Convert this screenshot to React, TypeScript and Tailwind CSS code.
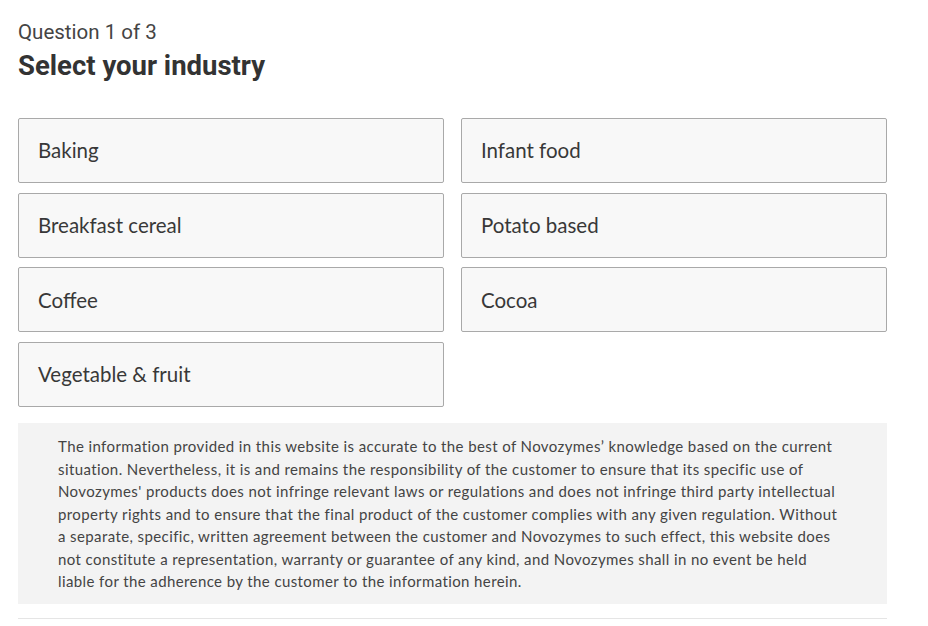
import React from 'react';

const industries = [
  'Baking',
  'Infant food',
  'Breakfast cereal',
  'Potato based',
  'Coffee',
  'Cocoa',
  'Vegetable & fruit',
];

const disclaimerLines = [
  "The information provided in this website is accurate to the best of Novozymes\u2019 knowledge based on the current",
  'situation. Nevertheless, it is and remains the responsibility of the customer to ensure that its specific use of',
  "Novozymes' products does not infringe relevant laws or regulations and does not infringe third party intellectual",
  'property rights and to ensure that the final product of the customer complies with any given regulation. Without',
  'a separate, specific, written agreement between the customer and Novozymes to such effect, this website does',
  'not constitute a representation, warranty or guarantee of any kind, and Novozymes shall in no event be held',
  'liable for the adherence by the customer to the information herein.',
];

export default function App() {
  return (
    <div className="min-h-screen bg-white px-[18px] pt-[20px] w-[905px] font-['Lato',sans-serif]">
      <div className="text-[20.5px] leading-[24px] text-[#444] font-['Roboto',sans-serif]">Question 1 of 3</div>
      <h1 className="mt-[6px] text-[27.5px] leading-[32px] font-bold text-[#333] font-['Roboto',sans-serif]">
        Select your industry
      </h1>

      <div className="mt-[36px] grid grid-cols-2 gap-x-[17px] gap-y-[9.7px]">
        {industries.map(name => (
          <button
            key={name}
            type="button"
            className="h-[65px] rounded-[2px] border border-[#a9a9a9] bg-[#f8f8f8] px-[19px] text-left text-[20.5px] text-[#383838]"
          >
            {name}
          </button>
        ))}
      </div>

      <div className="mt-[16px] bg-[#f3f3f3] pl-[40px] pr-[30px] pt-[12px] pb-[11px] text-[15px] tracking-[0.4px] leading-[22.5px] text-[#444]">
        {disclaimerLines.map(line => (
          <span key={line} className="block whitespace-nowrap">{line}</span>
        ))}
      </div>

      <div className="mt-[14px] h-px bg-[#e5e5e5]" />
    </div>
  );
}
